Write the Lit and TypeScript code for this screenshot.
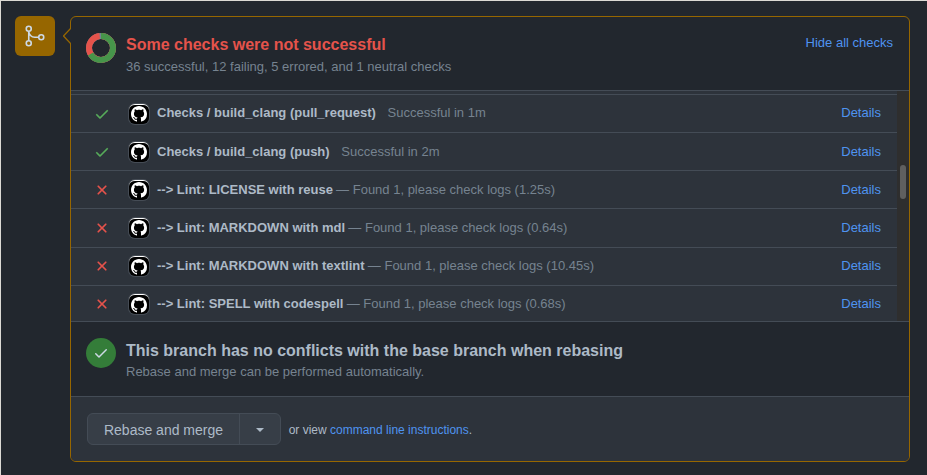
import { LitElement, html, css, svg } from "lit";
import { customElement, property } from "lit/decorators.js";

const CHECK = svg`<path d="M13.78 4.22a.75.75 0 0 1 0 1.06l-7.25 7.25a.75.75 0 0 1-1.06 0L2.22 9.28a.75.75 0 0 1 1.06-1.06L6 10.94l6.72-6.72a.75.75 0 0 1 1.06 0Z"></path>`;
const CROSS = svg`<path d="M3.72 3.72a.75.75 0 0 1 1.06 0L8 6.94l3.22-3.22a.75.75 0 1 1 1.06 1.06L9.06 8l3.22 3.22a.75.75 0 1 1-1.06 1.06L8 9.06l-3.22 3.22a.75.75 0 0 1-1.06-1.06L6.94 8 3.72 4.78a.75.75 0 0 1 0-1.06Z"></path>`;
const MARK = svg`<path d="M8 0C3.58 0 0 3.58 0 8c0 3.54 2.29 6.53 5.47 7.59.4.07.55-.17.55-.38 0-.19-.01-.82-.01-1.49-2.01.37-2.53-.49-2.69-.94-.09-.23-.48-.94-.82-1.13-.28-.15-.68-.52-.01-.53.63-.01 1.08.58 1.23.82.72 1.21 1.87.87 2.33.66.07-.52.28-.87.51-1.07-1.78-.2-3.64-.89-3.64-3.95 0-.87.31-1.59.82-2.15-.08-.2-.36-1.02.08-2.12 0 0 .67-.21 2.2.82.64-.18 1.32-.27 2-.27s1.36.09 2 .27c1.53-1.04 2.2-.82 2.2-.82.44 1.1.16 1.92.08 2.12.51.56.82 1.27.82 2.15 0 3.07-1.87 3.75-3.65 3.95.29.25.54.73.54 1.48 0 1.07-.01 1.93-.01 2.2 0 .21.15.46.55.38A8.01 8.01 0 0 0 16 8c0-4.42-3.58-8-8-8Z"></path>`;

@customElement("check-row")
class CheckRow extends LitElement {
  @property({ type: Boolean }) ok = false;
  @property() name = "";
  @property() note = "";

  static styles = css`
    :host { display: flex; align-items: center; box-sizing: border-box; height: 38.15px; border-top: 1px solid #444c56; padding: 0 16px 0 23px; }
    .state { width: 16px; height: 16px; fill: #e5534b; stroke: #e5534b; stroke-width: 0.2; }
    .ok { fill: #57ab5a; stroke: #57ab5a; }
    .avatar { box-sizing: border-box; display: flex; align-items: center; justify-content: center; width: 20px; height: 20px; margin: 0 8px 0 19px; background: #000; border-radius: 6px; box-shadow: 0 0 0 1px #454c55; border-top: 1px solid #fff; }
    .avatar svg { width: 16px; height: 16px; fill: #fff; }
    .text { flex: 1; white-space: pre; color: #768390; margin-top: -0.2px; }
    .text b { color: #adbac7; margin-right: -0.4px; }
    .gap { margin-left: 12px; }
    a { color: #4f93f0; margin-top: -0.2px; }
  `;

  render() {
    return html`
      <svg class="state ${this.ok ? "ok" : ""}" viewBox="0 0 16 16">${this.ok ? CHECK : CROSS}</svg>
      <span class="avatar"><svg viewBox="0 0 16 16">${MARK}</svg></span>
      <span class="text"><b>${this.name}</b>${this.ok ? html`<span class="gap">${this.note}</span>` : ` — ${this.note}`}</span>
      <a>Details</a>`;
  }
}

const CHECKS = [
  { ok: true, name: "Checks / build_clang (pull_request)", note: "Successful in 1m" },
  { ok: true, name: "Checks / build_clang (push)", note: "Successful in 2m" },
  { ok: false, name: "--> Lint: LICENSE with reuse", note: "Found 1, please check logs (1.25s)" },
  { ok: false, name: "--> Lint: MARKDOWN with mdl", note: "Found 1, please check logs (0.64s)" },
  { ok: false, name: "--> Lint: MARKDOWN with textlint", note: "Found 1, please check logs (10.45s)" },
  { ok: false, name: "--> Lint: SPELL with codespell", note: "Found 1, please check logs (0.68s)" },
];

@customElement("app-root")
class AppRoot extends LitElement {
  static styles = css`
    :host { display: flex; align-items: flex-start; box-sizing: border-box; width: 927px; height: 475px; padding: 15px 17px 0 14px; border-top: 1px solid #dcdad5; border-left: 1px solid #dcdad5; background: #22272e; color: #adbac7; font: 13px/20px "Liberation Sans", Arial, sans-serif; overflow: hidden; }
    .badge { display: flex; align-items: center; justify-content: center; width: 40px; height: 40px; border-radius: 6px; background: #966600; }
    .badge svg { width: 24px; height: 24px; fill: none; stroke: #cdd9e5; stroke-width: 1.6; }
    .box { position: relative; box-sizing: border-box; width: 840px; height: 446px; margin-left: 15px; border: 1px solid #966600; border-radius: 6px; display: flex; flex-direction: column; }
    .pointer { position: absolute; left: -8px; top: 11px; width: 8px; height: 16px; }
    .head { box-sizing: border-box; display: flex; height: 73px; padding: 16px 16px 0 15px; }
    .ring { width: 30px; height: 30px; margin-right: 10px; fill: none; stroke-width: 6; }
    .grow { flex: 1; }
    .title { font-size: 16px; font-weight: bold; line-height: 24px; }
    .bad { color: #e5534b; }
    .sub { color: #768390; line-height: 20px; }
    .link { color: #4f93f0; }
    .list { display: flex; height: 230px; border-top: 1px solid #444c56; background: #2d333b; overflow: hidden; }
    .rows { flex: 1; padding-top: 3px; }
    .track { width: 12px; background: #2e2e2e; }
    .thumb { width: 6px; height: 34px; margin: 74px 0 0 3px; border-radius: 3px; background: #5f5f5f; }
    .clean { border-top: 1px solid #444c56; height: 75px; padding-top: 17px; }
    .clean .sub { line-height: 18px; }
    .tick { display: flex; align-items: center; justify-content: center; width: 30px; height: 30px; margin: -1px 10px 0 0; border-radius: 50%; background: #347d39; }
    .tick svg { width: 16px; height: 16px; fill: #cdd9e5; }
    .foot { flex: 1; display: flex; align-items: center; padding-left: 16px; border-top: 1px solid #444c56; background: #2d333b; border-radius: 0 0 5px 5px; font-size: 12px; }
    .button { box-sizing: border-box; display: flex; width: 194px; height: 32px; margin-right: 7.7px; border: 1px solid #444c56; border-radius: 6px; background: #373e47; font-size: 14px; line-height: 32px; }
    .label { width: 151px; text-align: center; border-right: 1px solid #444c56; }
    .arrow { flex: 1; display: flex; align-items: center; justify-content: center; padding-top: 2px; }
    .caret { border: 4px solid transparent; border-top-color: #adbac7; border-bottom: 0; }
    .hint { margin-top: 1.5px; }
  `;

  render() {
    return html`
      <div class="badge">
        <svg viewBox="0 0 24 24">
          <circle cx="5.75" cy="4.75" r="2.5"></circle><circle cx="5.75" cy="19.25" r="2.5"></circle><circle cx="18.25" cy="13.25" r="2.5"></circle>
          <path d="M5.75 7.25v9.5M5.75 7.25c0 3.3 2.7 6 6 6h4"></path>
        </svg>
      </div>
      <div class="box">
        <svg class="pointer" viewBox="0 0 8 16"><path d="M8 0 .5 8 8 16" fill="#22272e" stroke="#966600" stroke-width="1.3"></path></svg>
        <div class="head">
          <svg class="ring" viewBox="0 0 30 30">
            <g transform="rotate(-90 15 15)">
              <circle cx="15" cy="15" r="12" stroke="#768390"></circle>
              <circle cx="15" cy="15" r="12" stroke="#e5534b" pathLength="54" stroke-dasharray="53 54"></circle>
              <circle cx="15" cy="15" r="12" stroke="#46954a" pathLength="54" stroke-dasharray="36 54"></circle>
            </g>
          </svg>
          <div class="grow">
            <div class="title bad">Some checks were not successful</div>
            <div class="sub">36 successful, 12 failing, 5 errored, and 1 neutral checks</div>
          </div>
          <a class="link">Hide all checks</a>
        </div>
        <div class="list">
          <div class="rows">
            ${CHECKS.map((c) => html`<check-row ?ok=${c.ok} .name=${c.name} .note=${c.note}></check-row>`)}
          </div>
          <div class="track"><div class="thumb"></div></div>
        </div>
        <div class="head clean">
          <div class="tick"><svg viewBox="0 0 16 16">${CHECK}</svg></div>
          <div class="grow">
            <div class="title">This branch has no conflicts with the base branch when rebasing</div>
            <div class="sub">Rebase and merge can be performed automatically.</div>
          </div>
        </div>
        <div class="foot">
          <div class="button"><span class="label">Rebase and merge</span><span class="arrow"><i class="caret"></i></span></div>
          <span class="hint">or view <a class="link">command line instructions</a>.</span>
        </div>
      </div>`;
  }
}
